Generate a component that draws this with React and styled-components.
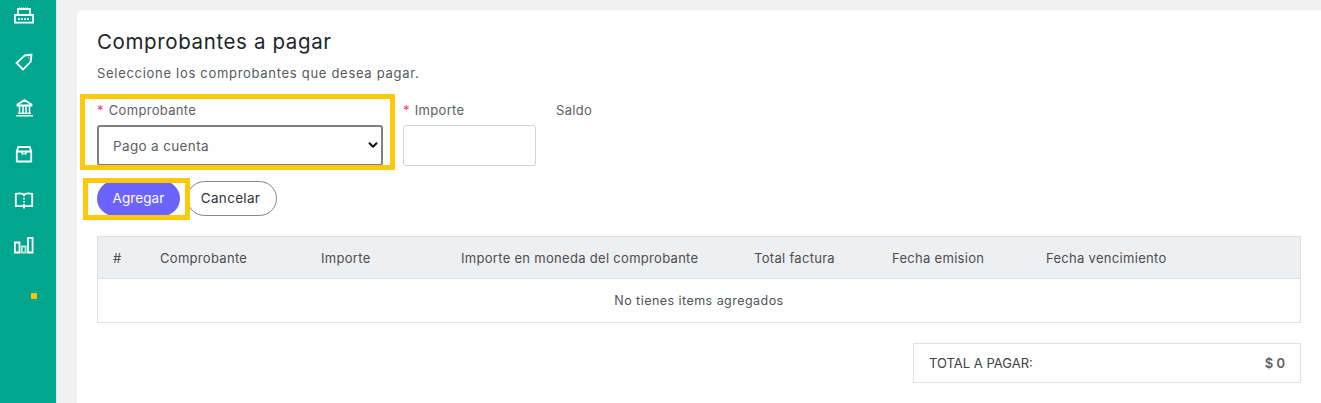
import React from 'react';
import styled, { createGlobalStyle } from 'styled-components';
import { ChevronDown } from 'lucide-react';

const GlobalStyle = createGlobalStyle`
  html, body {
    margin: 0;
    height: 100%;
    overflow: hidden;
    background: #f1f1f1;
    font-family: "Inter", "Open Sans", sans-serif;
  }
  * { box-sizing: border-box; }
`;

const Page = styled.div`
  display: flex;
  height: 403px;
  overflow: hidden;
`;

const Sidebar = styled.aside`
  width: 57px;
  flex-shrink: 0;
  background: #00a78e;
  border-right: 1px solid #e2e2e2;
  display: flex;
  flex-direction: column;
  align-items: center;
  padding: 4px 9px 0 0;
`;

const SideIcon = styled.div`
  width: 24px;
  height: 24px;
  margin-bottom: 22px;
  color: #fff;
  svg { display: block; width: 24px; height: 24px; }
`;

const Dot = styled.span`
  width: 6px;
  height: 6px;
  background: #ffc107;
  margin: 13px 0 0 20px;
`;

const UserGlyph = styled.div`
  width: 24px;
  height: 24px;
  margin-top: auto;
  margin-bottom: -21px;
  color: #fff;
  svg { display: block; width: 24px; height: 24px; }
`;

const Main = styled.main`
  flex: 1;
  padding: 10px 0 0 20px;
  min-width: 0;
`;

const Card = styled.section`
  background: #fff;
  border-radius: 5px 0 0 0;
  height: 100%;
  padding: 20px 20px 0 20px;
`;

const Title = styled.h1`
  margin: 0;
  font-size: 20.5px;
  line-height: 24px;
  font-weight: 400;
  letter-spacing: 0.62px;
  color: #212529;
`;

const Subtitle = styled.p`
  margin: 11px 0 0;
  font-size: 13px;
  line-height: 16px;
  letter-spacing: 0.7px;
  color: #54595e;
`;

const FormRow = styled.div`
  display: flex;
  margin-top: 21px;
`;

const Field = styled.div`
  position: relative;
  width: ${({ $width }) => $width}px;
  margin-left: ${({ $gap }) => $gap || 0}px;
  flex-shrink: 0;
`;

// marca amarilla sobre el contenido
const Highlight = styled.div`
  position: relative;
  &::after {
    content: '';
    position: absolute;
    top: ${({ $t }) => $t}px;
    left: ${({ $l }) => $l}px;
    right: ${({ $r }) => $r}px;
    bottom: ${({ $b }) => $b}px;
    border: 5px solid #ffc90b;
    pointer-events: none;
  }
`;

const Label = styled.label`
  display: block;
  height: 16px;
  font-size: 13px;
  line-height: 16px;
  letter-spacing: 0.3px;
  color: #5c6166;
  margin-bottom: 7px;
`;

const Required = styled.span`
  color: #ec407a;
  margin-right: 5px;
`;

const SelectWrap = styled.div`
  position: relative;
  svg {
    position: absolute;
    right: 3px;
    top: 13px;
    width: 14px;
    height: 14px;
    color: #111;
    pointer-events: none;
  }
`;

const Select = styled.select`
  display: block;
  width: 100%;
  height: 41px;
  padding: 0 0 0 14px;
  appearance: none;
  border: 2px solid #808080;
  border-radius: 3px;
  background: #fff;
  font-family: inherit;
  font-size: 13.5px;
  letter-spacing: 0.35px;
  color: #5a5e63;
`;

const Input = styled.input`
  display: block;
  width: 100%;
  height: 41px;
  border: 1px solid #ced4da;
  border-radius: 3px;
  background: #fff;
`;

const Buttons = styled.div`
  display: flex;
  margin-top: 15px;
`;

const PrimaryButton = styled.button`
  display: block;
  height: 35px;
  width: 83px;
  padding: 0 0 2px;
  border: none;
  border-radius: 18px;
  background: #6c63ff;
  color: #fff;
  font-family: inherit;
  font-size: 13.5px;
  letter-spacing: 0.1px;
`;

const OutlineButton = styled.button`
  height: 35px;
  width: 90px;
  margin-left: 7px;
  padding: 0 3px 2px 0;
  border: 1px solid #85868a;
  border-radius: 18px;
  background: #fff;
  color: #30343a;
  font-family: inherit;
  font-size: 13.5px;
  letter-spacing: 0.3px;
`;

const Table = styled.div`
  margin-top: 20px;
  border: 1px solid #dee2e6;
`;

const HeadRow = styled.div`
  display: flex;
  align-items: center;
  height: 42px;
  padding-left: 15px;
  background: #eeeff0;
  border-bottom: 1px solid #dee2e6;
`;

const HeadCell = styled.div`
  width: ${({ $width }) => $width}px;
  flex-shrink: 0;
  font-size: 13px;
  letter-spacing: 0.3px;
  color: #4a4e53;
  white-space: nowrap;
`;

const EmptyRow = styled.div`
  height: 43px;
  padding-bottom: 1px;
  display: flex;
  align-items: center;
  justify-content: center;
  font-size: 12.5px;
  letter-spacing: 0.46px;
  color: #4f5358;
`;

const TotalBox = styled.div`
  display: flex;
  justify-content: space-between;
  align-items: center;
  width: 388px;
  height: 40px;
  margin: 20px 0 0 auto;
  padding: 0 15px;
  border: 1px solid #dee2e6;
  font-size: 13px;
  color: #3e4246;
`;

const TotalValue = styled.span`
  font-weight: 600;
  color: #5d6166;
`;

const stroke = { fill: 'none', stroke: 'currentColor', strokeWidth: 1.8 };

const icons = [
  <svg viewBox="0 0 24 24" {...stroke}>
    <path d="M6 11V5h12v6" />
    <path d="M7 4h10" strokeDasharray="1 1" strokeWidth="1" />
    <path d="M2.900 11h18.200v7.600H2.900z" />
    <path d="M6 15.200h12" strokeDasharray="2 1" strokeWidth="1.800" />
  </svg>,
  <svg viewBox="0 0 24 24" {...stroke}>
    <path d="M12.500 5.500l7-1-.8 7L11 19.500 4.500 13z" />
    <path d="M16.500 7.500h.6" />
  </svg>,
  <svg viewBox="0 0 24 24" {...stroke}>
    <path d="M5.500 8.500L12.500 4l7 4.500v1h-14z" />
    <path d="M7.500 10v7M11 10v7M14 10v7M17.500 10v7" strokeWidth="1.500" />
    <path d="M6 17.300h13" strokeWidth="1.400" />
    <path d="M4 19.800h17" strokeWidth="1.400" />
  </svg>,
  <svg viewBox="0 0 24 24" {...stroke}>
    <path d="M4.800 9.500l1.500-4.500h11.400l1.500 4.500" />
    <path d="M4.800 9.500h14.400v10H4.800z" />
    <path d="M10 10v2h4v-2" strokeWidth="1.200" />
  </svg>,
  <svg viewBox="0 0 24 24" {...stroke}>
    <path d="M12 6.500C10 5.500 6 5.200 3.800 5.800v12.400h16.400V5.800C18 5.200 14 5.500 12 6.500z" />
    <path d="M12 7v13.500" strokeDasharray="1.500 1.500" strokeWidth="1.800" />
  </svg>,
  <svg viewBox="0 0 24 24" {...stroke}>
    <path d="M2.900 8.500h4.600v10H2.900z" />
    <path d="M9.800 12.500h3.800v6H9.800z" opacity="0.75" />
    <path d="M16 3.900h4.600v14.600H16z" />
  </svg>,
];

const columns = [
  ['#', 47], ['Comprobante', 161], ['Importe', 140],
  ['Importe en moneda del comprobante', 293], ['Total factura', 138],
  ['Fecha emision', 154], ['Fecha vencimiento', 150],
];

const App = () => (
  <Page>
    <GlobalStyle />
    <Sidebar>
      {icons.map((icon, i) => <SideIcon key={i}>{icon}</SideIcon>)}
      <Dot />
      <UserGlyph>
        <svg viewBox="0 0 24 24" {...stroke}><circle cx="12" cy="8" r="4" /><path d="M4 21c1-5 4-7 8-7s7 2 8 7" /></svg>
      </UserGlyph>
    </Sidebar>
    <Main>
      <Card>
        <Title>Comprobantes a pagar</Title>
        <Subtitle>Seleccione los comprobantes que desea pagar.</Subtitle>
        <FormRow>
          <Highlight $t={-8} $l={-17} $r={-12} $b={-4}>
            <Field $width={286}>
              <Label><Required>*</Required>Comprobante</Label>
              <SelectWrap>
                <Select defaultValue="cuenta">
                  <option value="cuenta">Pago a cuenta</option>
                </Select>
                <ChevronDown strokeWidth={3.5} />
              </SelectWrap>
            </Field>
          </Highlight>
          <Field $width={133} $gap={20}>
            <Label><Required>*</Required>Importe</Label>
            <Input />
          </Field>
          <Field $width={80} $gap={20}>
            <Label>Saldo</Label>
          </Field>
        </FormRow>
        <Buttons>
          <Highlight $t={-3} $l={-14} $r={-10} $b={-4}>
            <PrimaryButton>Agregar</PrimaryButton>
          </Highlight>
          <OutlineButton>Cancelar</OutlineButton>
        </Buttons>
        <Table>
          <HeadRow>
            {columns.map(([name, w]) => (
              <HeadCell key={name} $width={w}>{name}</HeadCell>
            ))}
          </HeadRow>
          <EmptyRow>No tienes items agregados</EmptyRow>
        </Table>
        <TotalBox>
          <span>TOTAL A PAGAR:</span>
          <TotalValue>$ 0</TotalValue>
        </TotalBox>
      </Card>
    </Main>
  </Page>
);

export default App;
